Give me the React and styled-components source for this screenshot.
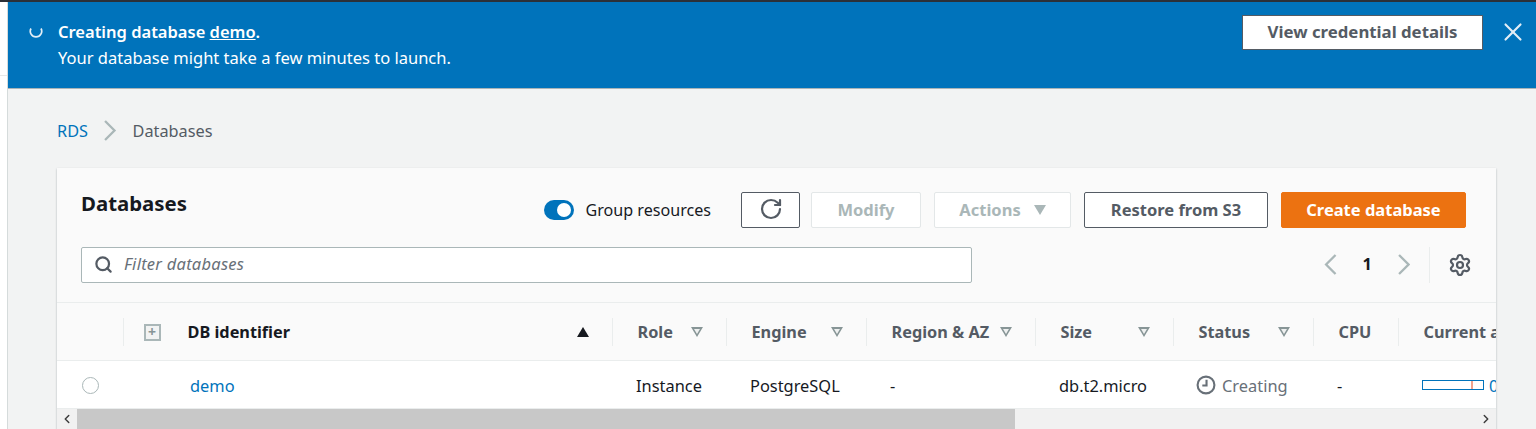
import React from 'react';
import styled, { createGlobalStyle } from 'styled-components';
import { RotateCw, Search, Settings, X, ChevronLeft, ChevronRight } from 'lucide-react';

const GlobalStyle = createGlobalStyle`
  html, body {
    margin: 0;
    padding: 0;
    background: #fff;
    font-family: "Noto Sans", "Open Sans", sans-serif;
    color: #16191f;
  }
`;

const Page = styled.div`
  height: 429px;
  overflow: hidden;
  border-top: 2px solid #2b3038;
  box-sizing: border-box;
  background: linear-gradient(#fff 73px, #e6e8e8 73px, #e6e8e8 74px, #fff 74px);
`;

const Main = styled.main`
  margin-left: 8px;
  height: 427px;
  background: #f2f3f3;
  box-shadow: -1px 0 0 #d5dbdb;
`;

const Flash = styled.div`
  display: flex;
  height: 87px;
  box-sizing: border-box;
  background: #0073bb;
  border-bottom: 1px solid #a9b4b8;
  color: #fff;
  padding: 13px 0 0 21px;
`;

const Spinner = styled.svg`
  width: 14px;
  height: 14px;
  margin-top: 9px;
  flex: none;
`;

const FlashText = styled.div`
  margin: 4px 0 0 15px;
  flex: 1;
  font-size: 16.5px;
  line-height: 26px;
`;

const FlashTitle = styled.div`
  font-weight: 600;
  a { color: #fff; text-decoration: underline; }
`;

const FlashAction = styled.button`
  width: 241px;
  height: 35px;
  box-sizing: border-box;
  background: #fff;
  border: 1px solid #545b64;
  color: #545b64;
  font: 700 16.8px "Noto Sans", sans-serif;
  padding: 0 0 3px;
`;

const FlashClose = styled.div`
  width: 53px;
  padding: 2px 0 0 15px;
  box-sizing: border-box;
  color: #e3eef6;
`;

const Crumbs = styled.nav`
  display: flex;
  align-items: center;
  height: 79px;
  box-sizing: border-box;
  padding: 4px 0 0 49px;
  font-size: 16.3px;
  color: #545b64;
`;

const CrumbLink = styled.a`
  color: #0073bb;
`;

const CrumbSep = styled.span`
  display: flex;
  color: #aab7b8;
  margin: 0 16px 0 16px;
`;

const Card = styled.section`
  margin-left: 49px;
  width: 1439px;
  height: 261px;
  overflow: hidden;
  background: #fafafa;
  box-shadow: 0 1px 2px rgba(0, 28, 36, 0.3);
  padding-top: 24px;
  box-sizing: border-box;
`;

const Toolbar = styled.div`
  display: flex;
  align-items: center;
  height: 36px;
  padding-left: 24px;
`;

const Title = styled.h1`
  margin: 0 auto 14px 0;
  font-size: 20.4px;
  line-height: 24px;
  font-weight: 700;
  color: #16191f;
`;

const ToggleLabel = styled.div`
  display: flex;
  align-items: center;
  gap: 12px;
  margin-right: 30px;
  font-size: 16.1px;
  color: #16191f;
`;

const Toggle = styled.span`
  display: flex;
  justify-content: flex-end;
  align-items: center;
  width: 30px;
  height: 20px;
  box-sizing: border-box;
  padding-right: 3px;
  background: #0073bb;
  border-radius: 10px;
  &::after {
    content: '';
    width: 14px;
    height: 14px;
    background: #fff;
    border-radius: 50%;
  }
`;

const Button = styled.button`
  display: flex;
  align-items: center;
  justify-content: center;
  gap: 13px;
  width: ${props => props.$width}px;
  height: 36px;
  margin-right: ${props => props.$gap}px;
  box-sizing: border-box;
  padding: 0 0 2px;
  border-radius: 2px;
  font: 700 16.5px "Noto Sans", sans-serif;
  background: ${props => (props.$primary ? '#ec7211' : '#fff')};
  border: 1px solid ${props => (props.$primary ? '#ec7211' : props.$disabled ? '#e3e7e8' : '#545b64')};
  color: ${props => (props.$primary ? '#fff' : props.$disabled ? '#aab7b8' : '#545b64')};
`;

const Caret = styled.span`
  width: 0;
  height: 0;
  border-left: 6.5px solid transparent;
  border-right: 6.5px solid transparent;
  border-top: 10px solid #aab7b8;
  margin-top: 2px;
`;

const FilterRow = styled.div`
  display: flex;
  align-items: center;
  height: 36px;
  margin-top: 19px;
  padding-left: 24px;
`;

const Filter = styled.div`
  display: flex;
  align-items: center;
  width: 891px;
  height: 36px;
  box-sizing: border-box;
  background: #fff;
  border: 1px solid #aab7b8;
  border-radius: 2px;
  padding: 0 0 2px 12px;
  color: #545b64;
`;

const FilterHint = styled.span`
  margin: 0 0 2px 11px;
  font-size: 16.5px;
  letter-spacing: 0.25px;
  font-style: italic;
  color: #687078;
`;

const Pager = styled.div`
  display: flex;
  align-items: center;
  margin: 0 0 1px 352px;
  color: #aab7b8;
`;

const PageNumber = styled.span`
  width: 61px;
  margin-bottom: 2px;
  text-align: center;
  font-size: 16.4px;
  font-weight: 700;
  color: #16191f;
`;

const PagerDivider = styled.span`
  height: 36px;
  margin: 0 18px 0 19px;
  border-left: 1px solid #eaeded;
`;

const Columns = '66px 489px 114px 140px 169px 138px 140px 85px 98px';

const HeadRow = styled.div`
  display: grid;
  grid-template-columns: ${Columns};
  align-items: center;
  height: 59px;
  margin-top: 19px;
  box-sizing: border-box;
  border-top: 1px solid #eaeded;
  border-bottom: 1px solid #eaeded;
`;

const HeadCell = styled.div`
  display: flex;
  align-items: center;
  justify-content: space-between;
  height: 28px;
  box-sizing: border-box;
  border-left: ${props => (props.$plain ? 'none' : '1px solid #eaeded')};
  padding: 1px 23px 0 24.5px;
  font-size: 16.3px;
  font-weight: 700;
  white-space: nowrap;
  color: ${props => (props.$strong ? '#16191f' : '#545b64')};
`;

const IdHead = styled.span`
  display: flex;
  align-items: center;
  gap: 27px;
  margin-left: -5px;
`;

const ExpandBox = styled.span`
  display: flex;
  align-items: center;
  justify-content: center;
  width: 13px;
  height: 13px;
  border: 2px solid #aab7b8;
  background: #f2f3f3;
  color: #879596;
  font-size: 14px;
  line-height: 14px;
  font-weight: 700;
`;

const SortUp = styled.span`
  width: 0;
  height: 0;
  border-left: 6.5px solid transparent;
  border-right: 6.5px solid transparent;
  border-bottom: 10px solid #16191f;
`;

const FilterMark = styled.span`
  width: 0;
  height: 0;
  border-left: 6.5px solid transparent;
  border-right: 6.5px solid transparent;
  border-top: 10px solid #879596;
  position: relative;
  &::after {
    content: '';
    position: absolute;
    left: -3.5px;
    top: -8px;
    border-left: 3.5px solid transparent;
    border-right: 3.5px solid transparent;
    border-top: 5.5px solid #eef0f0;
  }
`;

const BodyRow = styled.div`
  display: grid;
  grid-template-columns: ${Columns};
  align-items: center;
  height: 48px;
  padding-top: 1px;
  background: #fff;
  font-size: 16.4px;
  border-bottom: 1px solid #eaeded;
  box-sizing: border-box;
`;

const Cell = styled.div`
  display: flex;
  align-items: center;
  padding-left: ${props => props.$pad || 24}px;
  white-space: nowrap;
  overflow: hidden;
`;

const Radio = styled.span`
  width: 15px;
  height: 15px;
  border: 1px solid #aab7b8;
  border-radius: 50%;
  background: #fff;
`;

const DbLink = styled.a`
  color: #0073bb;
`;

const StatusText = styled.span`
  display: flex;
  align-items: center;
  gap: 6px;
  color: #687078;
`;

const Meter = styled.span`
  display: block;
  width: 60px;
  height: 8px;
  border: 1px solid #0073bb;
  background: linear-gradient(90deg, #fff 48px, #f0a18c 48px, #f0a18c 50px, #fff 50px);
  flex: none;
`;

const MeterValue = styled.span`
  margin-left: 5px;
  color: #0073bb;
`;

const Scrollbar = styled.div`
  display: flex;
  align-items: center;
  height: 20px;
  background: #f1f1f1;
  color: #3c3c3c;
`;

const ScrollArrow = styled.span`
  display: flex;
  justify-content: center;
  flex: none;
  width: 20px;
`;

const ScrollThumb = styled.span`
  flex: none;
  width: 938px;
  height: 100%;
  background: #c8c8c8;
`;

const ScrollRest = styled.span`
  flex: 1;
`;

const ClockIcon = () => (
  <svg width="20" height="20" viewBox="0 0 19 19" fill="none" stroke="#687078" strokeWidth="2">
    <circle cx="9.5" cy="9.5" r="8" />
    <path d="M10 4.5v5.5H6" />
  </svg>
);

const Chevron = ({ left, height }) => (
  <svg width={height * 0.6} height={height} viewBox="0 0 12 20" fill="none" stroke="currentColor" strokeWidth="2.2">
    <path d={left ? 'M11 1 2 10l9 9' : 'M1 1l9 9-9 9'} />
  </svg>
);

const filterColumns = [
  ['Role', true],
  ['Engine', true],
  ['Region & AZ', true],
  ['Size', true],
  ['Status', true],
  ['CPU', false],
  ['Current activity', false],
];

export default function App() {
  return (
    <Page>
      <GlobalStyle />
      <Main>
        <Flash>
          <Spinner viewBox="0 0 14 14" fill="none" stroke="#e3eef6" strokeWidth="1.7">
            <path d="M2 4.5a5.7 5.7 0 1 0 10 0" />
          </Spinner>
          <FlashText>
            <FlashTitle>Creating database <a href="#demo">demo</a>.</FlashTitle>
            <div>Your database might take a few minutes to launch.</div>
          </FlashText>
          <FlashAction>View credential details</FlashAction>
          <FlashClose><X size={30} strokeWidth={1.7} /></FlashClose>
        </Flash>
        <Crumbs>
          <CrumbLink>RDS</CrumbLink>
          <CrumbSep><Chevron height={21} /></CrumbSep>
          <span>Databases</span>
        </Crumbs>
        <Card>
          <Toolbar>
            <Title>Databases</Title>
            <ToggleLabel><Toggle />Group resources</ToggleLabel>
            <Button $width={59} $gap={11}><RotateCw size={24} strokeWidth={2.2} /></Button>
            <Button $width={110} $gap={13} $disabled>Modify</Button>
            <Button $width={137} $gap={13} $disabled>Actions <Caret /></Button>
            <Button $width={184} $gap={13}>Restore from S3</Button>
            <Button $width={185} $gap={30} $primary>Create database</Button>
          </Toolbar>
          <FilterRow>
            <Filter>
              <Search size={19} strokeWidth={2.8} />
              <FilterHint>Filter databases</FilterHint>
            </Filter>
            <Pager>
              <Chevron left height={21} />
              <PageNumber>1</PageNumber>
              <Chevron height={21} />
              <PagerDivider />
              <Settings size={24} strokeWidth={2.2} color="#545b64" />
            </Pager>
          </FilterRow>
          <HeadRow>
            <HeadCell $plain />
            <HeadCell $strong>
              <IdHead><ExpandBox>+</ExpandBox>DB identifier</IdHead>
              <SortUp />
            </HeadCell>
            {filterColumns.map(([name, filterable]) => (
              <HeadCell key={name}>
                {name}
                {filterable && <FilterMark />}
              </HeadCell>
            ))}
          </HeadRow>
          <BodyRow>
            <Cell $pad={25}><Radio /></Cell>
            <Cell $pad={67}><DbLink>demo</DbLink></Cell>
            <Cell>Instance</Cell>
            <Cell>PostgreSQL</Cell>
            <Cell>-</Cell>
            <Cell>db.t2.micro</Cell>
            <Cell $pad={23}><StatusText><ClockIcon />Creating</StatusText></Cell>
            <Cell>-</Cell>
            <Cell><Meter /><MeterValue>0.00</MeterValue></Cell>
          </BodyRow>
          <Scrollbar>
            <ScrollArrow><ChevronLeft size={14} strokeWidth={2.5} /></ScrollArrow>
            <ScrollThumb />
            <ScrollRest />
            <ScrollArrow><ChevronRight size={14} strokeWidth={2.5} /></ScrollArrow>
          </Scrollbar>
        </Card>
      </Main>
    </Page>
  );
}
